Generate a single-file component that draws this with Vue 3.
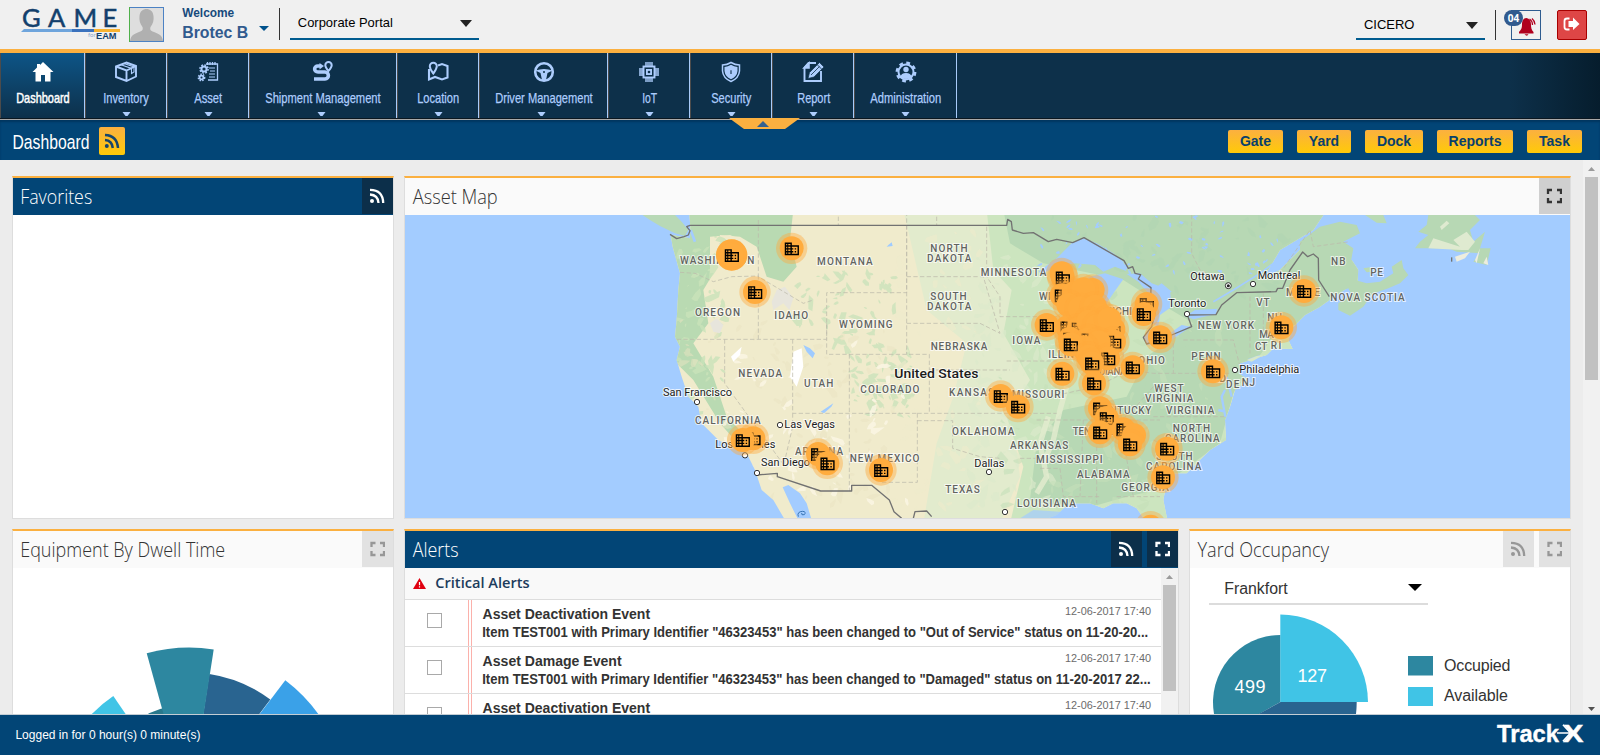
<script setup>
import { h } from 'vue'

// Single line of text fitted to a width; the element's bottom edge is the baseline.
const Fit = (props) =>
  h('svg', { class: 'fit', width: props.w, height: props.h }, [
    h('text', { x: props.x ?? -0.8, y: props.h, textLength: props.w, lengthAdjust: 'spacingAndGlyphs', fill: 'currentColor' }, props.t)
  ])
Fit.props = ['t', 'w', 'h', 'x']

const nav = [
  { t: 'Dashboard', w: 85, l: 53.5, icon: 'home', active: true },
  { t: 'Inventory', w: 82, l: 45.5, icon: 'box' },
  { t: 'Asset', w: 82, l: 28, icon: 'asset' },
  { t: 'Shipment Management', w: 148, l: 115.5, icon: 'route', shift: true },
  { t: 'Location', w: 82, l: 42, icon: 'map' },
  { t: 'Driver Management', w: 129, l: 97.5, icon: 'wheel', shift: true },
  { t: 'IoT', w: 82, l: 15, icon: 'chip' },
  { t: 'Security', w: 82, l: 40, icon: 'shield' },
  { t: 'Report', w: 82, l: 33, icon: 'report' },
  { t: 'Administration', w: 103, l: 71, icon: 'admin' }
]
const actions = [
  { t: 'Gate', w: 55 }, { t: 'Yard', w: 54 }, { t: 'Dock', w: 58 }, { t: 'Reports', w: 76 }, { t: 'Task', w: 55 }
]
const alerts = [
  { t: 'Asset Deactivation Event', tw: 167.5, d: 'Item TEST001 with Primary Identifier "46323453" has been changed to "Out of Service" status on 11-20-20...', dw: 666 },
  { t: 'Asset Damage Event', tw: 139, d: 'Item TEST001 with Primary Identifier "46323453" has been changed to "Damaged" status on 11-20-2017 22...', dw: 668.5 },
  { t: 'Asset Deactivation Event', tw: 167.5, d: 'Item TEST001 with Primary Identifier "46323453" has been changed to "Out of Service" status on 11-20-20...', dw: 666 }
]

const westStates = [
  ['WASHINGTON', 120, 161, 223], ['OREGON', 165, 317, 135], ['IDAHO', 403, 328, 101], ['MONTANA', 531, 164, 167],
  ['WYOMING', 597, 353, 161], ['NORTH', 871, 125, 112], ['DAKOTA', 861, 155, 133], ['SOUTH', 871, 269, 109],
  ['DAKOTA', 861, 299, 133], ['NEBRASKA', 872, 421, 170], ['NEVADA', 295, 500, 131], ['UTAH', 492, 530, 88],
  ['COLORADO', 661, 548, 177], ['KANSAS', 927, 557, 136], ['CALIFORNIA', 165, 643, 197], ['ARIZONA', 465, 734, 144],
  ['NEW MEXICO', 629, 757, 209], ['OKLAHOMA', 936, 676, 187], ['TEXAS', 916, 848, 103]
]
const eastStates = [
  ['MINNESOTA', 2, 199, 197], ['WISCONSIN', 177, 271, 170], ['MICHIGAN', 370, 315, 150], ['IOWA', 97, 401, 84],
  ['ILLINOIS', 205, 445, 130], ['INDIANA', 330, 495, 110], ['OHIO', 475, 463, 80], ['MISSOURI', 95, 565, 158],
  ['KENTUCKY', 350, 613, 164], ['VIRGINIA', 558, 613, 145], ['WEST', 523, 545, 88], ['VIRGINIA', 495, 575, 145],
  ['PENN', 634, 451, 88], ['NEW YORK', 653, 358, 169], ['VT', 829, 287, 40], ['NH', 862, 333, 44], ['MA', 838, 383, 44],
  ['CT', 825, 419, 37], ['RI', 872, 418, 32], ['NJ', 785, 527, 40], ['DE', 738, 535, 40], ['MD', 700, 517, 38],
  ['NORTH', 578, 665, 112], ['CAROLINA', 555, 695, 164], ['SOUTH', 528, 749, 110], ['CAROLINA', 498, 779, 166],
  ['TENNESSEE', 278, 676, 160], ['ARKANSAS', 90, 718, 175], ['MISSISSIPPI', 168, 760, 200], ['ALABAMA', 291, 805, 158],
  ['GEORGIA', 424, 844, 143], ['LOUISIANA', 111, 892, 177], ['MAINE', 918, 259, 102],
  ['NB', 1053, 164, 44], ['PE', 1171, 199, 38], ['NOVA SCOTIA', 1051, 272, 223]
]
const cities = [
  ['San Francisco', -951, 559, 207], ['Las Vegas', -587, 655, 152], ['Los Angeles', -794, 715, 180],
  ['San Diego', -657, 769, 147], ['Dallas', -17, 770, 90], ['Ottawa', 631, 209, 103], ['Montreal', 833, 206, 128],
  ['Toronto', 565, 292, 114], ['Philadelphia', 778, 490, 180]
]
const cityDots = [[-849, 576], [-600, 645], [-705, 736], [-669, 789], [27, 786], [819, 222], [621, 312], [765, 480], [75, 906]]

// [x, y, shows building icon, solid halo]
const markers = [
  [-745, 135, 1, 1], [-565, 115, 1], [-675, 246, 1], [-680, 685, 1], [-712, 690, 1], [-486, 732, 1], [-458, 760, 1], [-297, 780, 1],
  [248, 202, 1], [245, 190, 0], [248, 202, 2], [245, 256, 1], [282, 250, 0], [338, 240, 0], [310, 238, 0], [265, 285, 0], [262, 352, 1],
  [300, 295, 0], [345, 290, 0], [362, 316, 0], [368, 358, 1], [400, 358, 1], [296, 356, 1], [325, 335, 0], [352, 348, 0], [388, 328, 0],
  [270, 386, 1], [325, 388, 1], [330, 428, 1], [402, 395, 1], [356, 397, 0], [310, 412, 0], [272, 403, 1], [384, 445, 1], [325, 440, 0],
  [336, 460, 1], [200, 345, 1], [500, 282, 1], [491, 312, 1], [540, 382, 1], [699, 484, 1], [972, 243, 1], [904, 352, 1],
  [458, 472, 1], [247, 491, 1], [342, 520, 1], [62, 558, 1], [114, 590, 1], [360, 595, 1], [380, 624, 1], [360, 667, 1],
  [430, 658, 1], [462, 676, 0], [450, 703, 1], [561, 716, 1], [549, 802, 1], [512, 950, 0]
]

// Deterministic terrain speckle
let seed = 7
const rnd = () => ((seed = (seed * 16807) % 2147483647) / 2147483647)
const patches = (n, x0, y0, w, ht, max) =>
  Array.from({ length: n }, () => {
    const x = x0 + rnd() * w, y = y0 + rnd() * ht, a = rnd() * 6.28, s = 5 + rnd() * max
    return 'M' + [0, 1, 2, 3, 4, 5].map((i) => {
      const r = s * (0.35 + rnd() * 0.65), g = i * 1.047
      const px = Math.cos(g) * r * 1.5, py = Math.sin(g) * r * 0.7
      return `${(x + px * Math.cos(a) - py * Math.sin(a)).toFixed(0)} ${(y + px * Math.sin(a) + py * Math.cos(a)).toFixed(0)}`
    }).join('L') + 'Z'
  }).join('')
const creamW = patches(110, -900, 330, 650, 560, 15)
const paleW = patches(60, -780, 400, 560, 480, 14)
const greenW = patches(60, -550, 180, 300, 250, 14)
const greenRocky = patches(65, -390, 430, 190, 190, 14)
const greenCoast = patches(55, -910, 80, 150, 540, 18)
const greenE = patches(130, 60, 330, 720, 560, 20)
const paleE = patches(110, -30, 120, 260, 780, 19)
const darkE = patches(70, 200, 20, 740, 250, 20)
const plains = patches(80, -260, 40, 260, 860, 20)
const lakes = patches(65, 180, 20, 720, 170, 3)
</script>

<template>
  <div class="app">
    <header class="top">
      <svg class="logo" width="102" height="49" viewBox="20 0 102 49">
        <g class="logo-game"><text x="22" y="27">G</text><text x="48" y="27">A</text><text x="73.500" y="27" textLength="22">M</text><text x="102.500" y="27">E</text></g>
        <path d="M24 29H72V32H21Z" fill="#6fa5dc" /><path d="M72 29H94V32H72Z" fill="#3b72bd" /><path d="M94 29H120V32H94Z" fill="#f8b331" />
        <text x="88" y="37" class="logo-for">for</text><text x="96" y="39" textLength="20.500" lengthAdjust="spacingAndGlyphs" class="logo-eam">EAM</text>
      </svg>
      <svg class="avatar" width="35" height="35" viewBox="0 0 35 35">
        <rect x=".5" y=".5" width="34" height="34" fill="#dedede" stroke="#4c82c4" /><path d="M.5 0V35" stroke="#4fb04a" />
        <path d="M1 34C2 28 5 27 10 25C14 24 14 22 13.500 20C11 17 10 13 10.500 9C11 4 14 2 17.500 2S24 4 24.500 9C25 13 24 17 21.500 20C21 22 21 24 25 25C30 27 33 28 34 34Z" fill="#b0b0b0" />
      </svg>
      <div class="user">
        <Fit class="welcome" t="Welcome" :w="52" :h="17" />
        <Fit class="username" t="Brotec B" :w="66" :h="21" />
      </div>
      <svg class="user-caret" width="10" height="5"><path d="M0 0H10L5 5Z" fill="#00528c" /></svg>
      <i class="divider"></i>
      <div class="select portal">
        <Fit t="Corporate Portal" :w="95" :h="27" :x="-0.2" />
        <svg width="12" height="7"><path d="M0 0H12L6 7Z" fill="#222" /></svg>
      </div>
      <div class="select site">
        <Fit t="CICERO" :w="50.5" :h="29" :x="-0.1" />
        <svg width="12" height="7"><path d="M0 0H12L6 7Z" fill="#222" /></svg>
      </div>
      <i class="divider right"></i>
      <div class="bell">
        <svg width="28" height="28" viewBox="0 0 28 28"><path d="M14.500 7C11 7.500 10 10 10 14C10 18 8.500 19 7 21V22.500H21.500V21C19.500 19 19 17 19 13.500C19 10 17.500 7.500 14.500 7ZM12.500 23.300H16.500Q15 26 12.500 23.300Z" fill="#b0001e" /><path d="M17.500 8Q20.500 10 20.500 14M20 7.500Q22.500 9.500 23 13.500" fill="none" stroke="#b0001e" stroke-width="1.300" /></svg>
        <span class="badge">04</span>
      </div>
      <div class="logout">
        <svg width="28" height="28" viewBox="0 0 28 28"><path d="M11.500 7.500H9Q6.500 7.500 6.500 10V16Q6.500 18.500 9 18.500H11.500" fill="none" stroke="#fff" stroke-width="1.800" /><path d="M10.500 10H15V6.500L21.500 13L15 19V16H10.500Z" fill="#fff" /></svg>
      </div>
    </header>

    <nav class="nav">
      <div v-for="n in nav" :key="n.t" class="cell" :class="{ active: n.active, shift: n.shift }" :style="{ width: n.w + 'px' }">
        <svg class="ico" width="22" height="22" viewBox="0 0 22 22" fill="none" stroke="currentColor" stroke-width="1.600">
          <path v-if="n.icon === 'home'" d="M11 1L21.500 11H18.500V20.500H13V14H9V20.500H3.500V11H.5L5 6.500V3H8V4Z" fill="currentColor" stroke="none" />
          <g v-else-if="n.icon === 'box'"><path d="M1 5.500L11.500 1.500L21 5V15.500L11.500 20L1 16Z M1 5.500L11.500 9.500L21 5M11.500 9.500V20" stroke-width="1.900" /><path d="M6 3.800L16.500 7.500V12.500L19 11V6L9 2.500" stroke-width="1.100" /></g>
          <g v-else-if="n.icon === 'asset'"><path d="M9 3H20.500V19H11M10.500 1V4M13 1V4M15.500 1V4M18 1V4" stroke-width="1.300" /><path d="M12 7H18M13 10H18M12 13H18M12 16H18" stroke-width="1.100" /><circle cx="7" cy="8" r="2.600" stroke-width="2" /><circle cx="7" cy="8" r="4.100" stroke-dasharray="1.800 1.400" stroke-width="1.500" /><circle cx="4.500" cy="16.500" r="1.900" stroke-width="1.800" /><circle cx="4.500" cy="16.500" r="3.200" stroke-dasharray="1.500 1.200" stroke-width="1.400" /></g>
          <g v-else-if="n.icon === 'route'"><path d="M9 5H6C1.500 5 1.500 11 6 11H13C17.500 11 17.500 18 13 18H2" stroke-width="3.600" /><path d="M7.500 2L12 5L7.500 8.500Z" fill="currentColor" stroke="none" /><path d="M16.500 10C14.500 7.500 13.300 6 13.300 4.200A3.200 3.200 0 0 1 19.700 4.200C19.700 6 18.500 7.500 16.500 10Z" stroke-width="2" /></g>
          <g v-else-if="n.icon === 'map'"><path d="M2 8V18.500L8 16L15 18.500L20.500 16.500V5L15 3L11 4.500" stroke-width="2.100" /><path d="M6.300 12.500C4 9 2.800 7.500 2.800 5.200A3.500 3.500 0 0 1 9.800 5.200C9.800 7.500 8.600 9 6.300 12.500Z" stroke-width="2" /></g>
          <g v-else-if="n.icon === 'wheel'"><circle cx="11" cy="11" r="8.800" stroke-width="2.600" /><path d="M2.500 9.500Q11 6.500 19.500 9.500L14.500 12L13 19H9L7.500 12Z" fill="currentColor" stroke="none" /><circle cx="11" cy="11" r="1" fill="#0d304a" stroke="none" /></g>
          <g v-else-if="n.icon === 'chip'"><path d="M8 1V5M10 1V5M12 1V5M14 1V5M8 17V21M10 17V21M12 17V21M14 17V21M1 8H5M1 10H5M1 12H5M1 14H5M17 8H21M17 10H21M17 12H21M17 14H21" stroke-width="1.400" /><rect x="5.500" y="5.500" width="11" height="11" stroke-width="1.900" /><rect x="8" y="8" width="6" height="6" fill="currentColor" stroke="none" /><circle cx="11" cy="11" r="1.300" fill="#0d304a" stroke="none" /></g>
          <g v-else-if="n.icon === 'shield'"><path d="M11 1.500Q15 4 19.500 4V10Q19 17 11 20.500Q3 17 2.500 10V4Q7 4 11 1.500Z" stroke-width="1.500" /><path d="M11 3.700Q14 5.800 17.500 5.900V10Q17 15.500 11 18.300Q5 15.500 4.500 10V5.900Q8 5.800 11 3.700Z" fill="currentColor" stroke="none" /><path d="M11 9.300V13" stroke="#0d304a" stroke-width="1.100" /></g>
          <g v-else-if="n.icon === 'report'"><path d="M14 2H6.500L2.500 6.500V20H19V10" stroke-width="1.900" /><path d="M7 2V7H2Z" fill="currentColor" /><path d="M17.500 1.500L22 6L12 16L6 17.500L7.500 11.500Z" fill="currentColor" stroke="#0d304a" stroke-width=".7" /><path d="M9 14L17.500 5.500M15.500 4L19.500 8" stroke="#0d304a" stroke-width=".8" /></g>
          <g v-else><circle cx="11" cy="11" r="7.500" stroke-width="2" /><circle cx="11" cy="11" r="9" stroke-width="2.800" stroke-dasharray="3.700 3.370" /><circle cx="11" cy="8.500" r="2.700" fill="currentColor" stroke="none" /><path d="M5.500 16Q6 12 11 12T16.500 16Q11 20 5.500 16Z" fill="currentColor" stroke="none" /></g>
        </svg>
        <Fit class="nav-label" :t="n.t" :w="n.l" :h="20" :x="0.2" />
        <svg v-if="!n.active" class="nav-caret" width="9" height="5"><path d="M.5 0H8.500L5.500 4H3.500Z" fill="currentColor" /></svg>
      </div>
      <svg class="tab" width="71" height="11"><path d="M0 0H71L56 11H15Z" fill="#fbb040" /><path d="M28 9L34 3L40 9Z" fill="#34618f" /></svg>
    </nav>

    <section class="titlebar">
      <Fit class="page-title" t="Dashboard" :w="77" :h="29" :x="-0.5" />
      <span class="rss-btn"><svg width="16" height="16" viewBox="0 0 16 16"><circle cx="2.800" cy="13" r="2" fill="#17456c" /><path d="M1 7Q8 7.500 8.800 15M1 2Q13 2.500 14 15" fill="none" stroke="#17456c" stroke-width="2.500" /></svg></span>
      <span class="spacer"></span>
      <button v-for="a in actions" :key="a.t" class="act" :style="{ width: a.w + 'px' }">{{ a.t }}</button>
    </section>

    <main class="content">
      <div class="boards">
        <div class="row first">
          <section class="panel narrow dark">
            <div class="head"><Fit class="ptitle" t="Favorites" :w="72" :h="26" /><span class="pbtn"><svg width="16" height="16" viewBox="0 0 16 16"><circle cx="3" cy="13" r="2" /><path d="M1 6.500Q9 7 9.500 15M1 1.800Q14 2 14.200 15" class="line" /></svg></span></div>
          </section>
          <section class="panel wide">
            <div class="head"><Fit class="ptitle" t="Asset Map" :w="85" :h="26" :x="-0.3" /><span class="pbtn strong"><svg width="16" height="16" viewBox="0 0 16 16"><path d="M2 6V2H6M11 2H15V6M15 10V14H11M6 14H2V10" class="line" /></svg></span></div>
            <svg class="map" width="1165" height="303" viewBox="405 215 1165 303">
              <defs>
                <clipPath id="land"><path d="M-1000 0H-873L-869 50L-870 85L-928 74L-922 110L-900 190L-905 240L-910 330L-915 380L-900 410L-910 450L-895 500L-875 560L-845 590L-835 640L-785 690L-750 710L-700 730L-675 780L-655 840L-620 870L-585 930H-545L-570 880L-592 832L-575 825L-540 850L-520 880L-505 930H-300L190 930L230 915L250 895L270 880L330 880L370 895L400 880L440 880L470 895L495 930H562L550 870L565 790L620 790L650 760L690 720L738 690L735 630L750 590L765 540L805 510L775 490L780 460L860 435L880 415L938 417L925 390L940 350L975 315L1020 290L1060 262L1100 235L1132 220L1135 180L1115 150L1040 140L990 90L900 180L850 205L900 120L1000 60L1040 0Z" /></clipPath>
                <g id="pin"><circle r="47" fill="#ffa93b" opacity=".42" /><circle r="36" fill="#ffac3e" /></g>
                <path id="bld" d="M12 7V3H2v18h20V7H12zM5.500 19H4v-2h1.500zm0-4H4v-2h1.500zm0-4H4V9h1.500zm0-4H4V5h1.500zM10 19H7v-2h3zm0-4H7v-2h3zm0-4H7V9h3zm0-4H7V5h3zM20 19h-8v-2h2v-2h-2v-2h2v-2h-2V9h8zM18 11h-2v2h2zm0 4h-2v2h2z" />
              </defs>
              <rect x="405" y="215" width="1165" height="303" fill="#a3ccff" />
              <g transform="translate(980 210) scale(.333333)">
                <g clip-path="url(#land)">
                  <rect x="-1100" y="0" width="2400" height="950" fill="#f0ebcc" />
                  <path d="M-230 0H130L110 200L170 330L160 520L100 650L120 800L60 940H-170L-130 700L-80 560L-40 400L-160 300Z" fill="#e2ebcd" />
                  <path d="M20 0H1300V940H90L130 770L80 620L150 510L70 370L95 240L40 180Z" fill="#cce5bf" />
                  <path d="M70 0H1300V300L900 350L760 550L720 700L530 840L440 860L300 900L150 870L170 700L250 600L440 560L500 440L640 340L540 280L430 210L190 160L90 100Z" fill="#b7d8b4" />
                  <path d="M510 450L640 400L760 405L740 490L590 520L520 620L450 660L490 560Z" fill="#b7d8b4" />
                  <path d="M-1000 0H-560L-570 90L-550 170L-590 215L-640 200L-670 110L-720 80L-780 75L-800 190L-830 240L-815 340L-860 400L-800 500L-760 620L-700 680L-710 720L-780 640L-860 510L-940 430Z" fill="#b9dab2" />
                  <path d="M-810 80L-750 75L-690 100L-700 180L-810 190Z" fill="#f0ebcc" />
                  <path :d="greenCoast" fill="#c9e2b9" opacity=".8" /><path :d="greenW" fill="#c8e2b9" opacity=".75" />
                  <path :d="greenRocky" fill="#c8e2b9" opacity=".75" /><path :d="creamW" fill="#e9e3c1" opacity=".5" />
                  <path :d="paleW" fill="#fbf6e5" opacity=".8" /><path :d="plains" fill="#efebcb" opacity=".6" />
                  <path :d="paleE" fill="#dce9cb" opacity=".65" /><path :d="greenE" fill="#c4e0b9" opacity=".6" />
                  <path :d="darkE" fill="#acd2b0" opacity=".32" /><path :d="lakes" fill="#a3ccff" />
                  <path d="M-560 425L-535 415L-530 470L-550 530L-570 500ZM-747 440L-715 410L-720 435L-740 455Z" fill="#fff" />
                  <path d="M-530 405L-510 415L-495 430L-502 445L-520 425ZM-275 105L-265 97L-262 108L-280 110ZM-478 605L-440 580L-446 590L-468 610Z" fill="#9fcbff" />
                  <path d="M-610 240L-585 230L-560 265L-572 300L-590 280L-620 300L-625 275ZM-810 340L-790 325L-770 345L-780 370L-800 365Z" fill="#e7e5dc" />
                  <path d="M205 620L180 700L200 800L170 850M260 530L240 600L220 690L190 760" fill="none" stroke="#e3ecd0" stroke-width="16" opacity=".8" />
                </g>
                <path d="M-1020 10H-920L-895 35L-875 60L-885 78L-915 70L-960 48L-990 30Z" fill="#b8d9b6" />
                <path d="M-905 15L-880 40M-868 60L-855 95" fill="none" stroke="#a3ccff" stroke-width="8" />
                <path d="M175 185L230 145L275 100L310 85L350 100L400 130L430 155L438 183L405 170L370 185L345 165L285 160L230 170L190 190ZM280 240L330 200L375 190L430 208L400 250L380 280L355 340L350 440L320 445L290 400ZM440 192L480 190L515 220L570 240L575 290L540 315L535 350L515 340L525 310L505 250L475 215ZM545 220L575 245L560 252L530 230ZM490 380L500 405L560 400L632 350L605 345L570 370L525 385L505 365ZM618 318L645 300L712 296L708 312L640 328Z" fill="#a3ccff" />
                <path d="M700 275L760 240L840 190L880 160" fill="none" stroke="#a3ccff" stroke-width="5" />
                <path d="M736 620L725 560L735 540M735 605L715 600M805 450L840 438M740 500L755 560" fill="none" stroke="#a3ccff" stroke-width="7" />
                <path d="M150 905L220 905L210 930H140ZM120 925L160 900L240 905L260 925Z" fill="#a3ccff" opacity=".7" />
                <path d="M800 450L830 438L850 435L815 455Z" fill="#d7e7c9" />
                <path d="M960 95L1020 50L1080 35L1130 45L1140 70L1090 95L1120 115L1110 170L1135 185L1125 210L1160 220L1200 215L1240 190L1235 170L1265 150L1270 175L1285 195L1260 220L1225 235L1195 245L1175 255L1150 290L1110 317L1075 300L1075 280L1115 255L1105 235L1060 250L1020 260L960 290Z" fill="#b7d8b4" />
                <path d="M1155 15L1210 15L1220 40L1190 38ZM1150 175L1170 172L1175 185L1160 187Z" fill="#b9dab4" />
                <path d="M1345 15H1485L1500 30L1470 60L1480 95L1515 65L1500 115L1532 115L1520 165L1480 155L1500 130L1430 125L1405 115L1305 115L1320 95L1345 75L1315 65L1340 45Z" fill="#b7d8b4" />
                <path d="M1345 115L1360 85L1440 110L1420 90L1460 65L1485 95L1465 120L1445 120ZM1380 50L1400 32L1408 40L1385 60Z" fill="#dfead0" />
                <path d="M1425 140L1470 125L1455 145L1430 155ZM1485 150L1500 115L1490 160ZM1510 160L1520 140L1525 165Z" fill="#ededde" />
                <g fill="none" stroke="#bcb9aa" stroke-width="2.200" stroke-dasharray="13 7">
                  <path d="M-900 187L-855 190L-800 215L-745 200L-665 198L-665 388M-910 388H-460V248H-220V0M-766 388V520L-585 770M-562 388V610H-188M-460 340V433H-152V610M-392 433V843M-562 610V650L-590 770M-220 200H10L60 370M-220 340H0L60 370M-220 46V433M-152 480H90M-188 610H120M-188 610V817H-300M-188 632H-82V715L0 740L60 745M-665 30V200L-530 280L-500 270M-425 20V45M-130 20V45M20 50V200L60 260V320H240M80 453H230M120 610H230M120 745H200M170 630H540M210 560L350 530L450 480L520 490L580 490H750M580 400V490M310 630L300 860M350 690V880M430 690L460 860M410 860H540M180 775H240L250 860H360M430 480V390M520 530L450 610L380 660M520 620H740M520 690L620 740M610 390H760L780 470M810 260V430M850 250V430M635 15V130L660 180L740 220M900 190L990 60L1000 110L1110 95" />
                </g>
                <g fill="none" stroke="#727272" stroke-width="4" stroke-linejoin="round">
                  <path d="M-930 73L-910 86L-888 80L-875 75L-870 62L-880 50L-870 46H80L83 28L94 35L97 60L130 70L160 68L185 83L205 95L230 88L278 98L312 83L432 152L445 175L458 170L465 190L482 194L475 207L513 233L512 265L525 310L515 350L490 382L500 402L575 375L635 350L622 315L708 314L725 285L770 248L888 245L893 235L908 235L930 180L968 126L983 140L1000 132L1015 145L1016 210L1048 260" />
                  <path d="M-669 795L-608 790V800L-478 843H-385V826H-325L-272 870L-258 905L-235 925M-200 925L-195 905L-160 903L-145 920" />
                  <path d="M1415 142V155" />
                </g>
                <g class="state">
                  <text v-for="(s, i) in westStates" :key="'w' + i" :x="s[1] - 1020" :y="s[2]" :textLength="s[3]" lengthAdjust="spacing">{{ s[0] }}</text>
                  <text v-for="(s, i) in eastStates" :key="'e' + i" :x="s[1]" :y="s[2]" :textLength="s[3]" lengthAdjust="spacing">{{ s[0] }}</text>
                </g>
                <g class="city"><text v-for="c in cities" :key="c[0]" :x="c[1]" :y="c[2]" :textLength="c[3]" lengthAdjust="spacingAndGlyphs">{{ c[0] }}</text></g>
                <text class="country" x="-257" y="504" textLength="252" lengthAdjust="spacingAndGlyphs">United States</text>
                <g fill="#fff" stroke="#333" stroke-width="3"><circle v-for="(d, i) in cityDots" :key="i" :cx="d[0]" :cy="d[1]" r="8" /><circle cx="745" cy="227" r="9" /></g>
                <circle cx="745" cy="227" r="4.500" fill="#222" />
                <path d="M-545 920Q-550 905 -532 904Q-520 905 -527 914Q-537 917 -535 909" fill="none" stroke="#3774b5" stroke-width="3" />
                <g v-for="(m, i) in markers" :key="i" :transform="`translate(${m[0]} ${m[1]})`">
                  <circle v-if="m[3]" r="47" fill="#ffac3e" /><use v-if="m[2] !== 2" href="#pin" /><use v-if="m[2]" href="#bld" transform="translate(-25 -24) scale(2.130)" />
                </g>
              </g>
            </svg>
          </section>
        </div>
        <div class="row second">
          <section class="panel narrow">
            <div class="head"><Fit class="ptitle" t="Equipment By Dwell Time" :w="205" :h="26" /><span class="pbtn"><svg width="16" height="16" viewBox="0 0 16 16"><path d="M2.500 6V2H6.500M11 2H15V6M15 10V14H11M6.500 14H2.500V10" class="line" /></svg></span></div>
            <svg width="380" height="146" viewBox="13 568 380 146">
              <g transform="translate(189.300 807)">
                <path d="M0 0L-41 -93.500A102.500 102.500 0 0 1 -20 -100.500Z" fill="#28788c" />
                <path d="M0 0L-107 -82A134.600 134.600 0 0 1 -76 -111Z" fill="#40c4e6" />
                <path d="M0 0L20 -133.100A134.600 134.600 0 0 1 81 -107.500Z" fill="#296490" />
                <path d="M0 0L96 -126.800A159 159 0 0 1 138 -79Z" fill="#3aa1e8" />
                <path d="M0 0L-42.600 -153.700A159.500 159.500 0 0 1 24.400 -157.600Z" fill="#2d87a0" />
              </g>
            </svg>
          </section>
          <section class="panel middle dark">
            <div class="head"><Fit class="ptitle" t="Alerts" :w="46" :h="26" :x="-0.3" /><span class="pbtn"><svg width="16" height="16" viewBox="0 0 16 16"><circle cx="3" cy="13" r="2" /><path d="M1 6.500Q9 7 9.500 15M1 1.800Q14 2 14.200 15" class="line" /></svg></span><span class="pbtn"><svg width="16" height="16" viewBox="0 0 16 16"><path d="M2.500 6V2H6.500M11 2H15V6M15 10V14H11M6.500 14H2.500V10" class="line" /></svg></span></div>
            <div class="alerts">
              <div class="list">
                <div class="crit"><svg width="13" height="11" viewBox="0 0 13 11"><path d="M6.500 0L13 11H0Z" fill="#e00010" /><path d="M6.500 4V7.200M6.500 8.300V9.500" stroke="#fff" stroke-width="1.200" /></svg><Fit t="Critical Alerts" :w="94.5" :h="20" /></div>
                <div v-for="(a, i) in alerts" :key="i" class="alert">
                  <span class="check"></span><span class="stripe"></span>
                  <div class="body">
                    <div class="line1"><Fit :t="a.t" :w="a.tw" :h="19" :x="-0.4" /><Fit class="date" t="12-06-2017 17:40" :w="86" :h="15" :x="0" /></div>
                    <Fit class="desc" :t="a.d" :w="a.dw" :h="18" />
                  </div>
                </div>
              </div>
              <div class="innerbar"><svg width="17" height="17"><path d="M5 11L8.500 7L12 11Z" fill="#9b9b9b" /></svg><i></i></div>
            </div>
          </section>
          <section class="panel yard">
            <div class="head"><Fit class="ptitle" t="Yard Occupancy" :w="131.5" :h="26" :x="-0.5" /><span class="pbtn"><svg width="16" height="16" viewBox="0 0 16 16"><circle cx="3" cy="13" r="2" /><path d="M1 6.500Q9 7 9.500 15M1 1.800Q14 2 14.200 15" class="line" /></svg></span><span class="pbtn"><svg width="16" height="16" viewBox="0 0 16 16"><path d="M2.500 6V2H6.500M11 2H15V6M15 10V14H11M6.500 14H2.500V10" class="line" /></svg></span></div>
            <div class="yselect"><Fit t="Frankfort" :w="63.5" :h="26" /><svg width="14" height="7"><path d="M0 0H14L7 7Z" fill="#000" /></svg></div>
            <svg width="380" height="109" viewBox="1190 605 380 109">
              <path d="M1280.500 635A67.500 67.500 0 0 0 1214 714H1259L1280.500 702Z" fill="#2d87a0" />
              <path d="M1280.500 702H1356.700Q1356.700 708 1356 714H1258.500Z" fill="#296490" />
              <path d="M1280.300 614.600A87.700 87.700 0 0 1 1368 702H1280.300Z" fill="#40c4e6" />
              <text class="pie" x="1234.500" y="693" textLength="31">499</text><text class="pie" x="1297.500" y="682" textLength="29.500">127</text>
              <rect x="1408" y="656" width="25" height="19.500" fill="#2d87a0" /><rect x="1408" y="687" width="25" height="19" fill="#40c4e6" />
              <text class="legend" x="1444" y="670.500" textLength="66.500">Occupied</text><text class="legend" x="1444" y="701" textLength="64">Available</text>
            </svg>
          </section>
        </div>
      </div>
      <div class="pagebar">
        <svg width="17" height="17"><path d="M5 11L8.500 7L12 11Z" fill="#9b9b9b" /></svg><i></i>
        <svg class="down" width="17" height="17"><path d="M5 10L8.500 14L12 10Z" fill="#505050" /></svg>
      </div>
    </main>

    <footer class="foot">
      <Fit t="Logged in for 0 hour(s) 0 minute(s)" :w="185" :h="24" :x="-0.6" />
      <svg class="track" width="88" height="24" viewBox="0 0 88 24"><text x="0" y="19.500" textLength="62" lengthAdjust="spacingAndGlyphs">Track</text><text x="66" y="19.500" textLength="20.500" lengthAdjust="spacingAndGlyphs">X</text><path d="M65 3L72.500 11L65 19" fill="none" stroke="#024576" stroke-width="2.400" /><path d="M60 11H73M66 2.800L73.500 11L66 19.200" fill="none" stroke="#fff" stroke-width="1.700" /></svg>
    </footer>
  </div>
</template>

<style>
html, body { margin: 0; overflow: hidden; }
svg.fit { display: block; overflow: visible; flex: none; }
</style>

<style scoped>
.app { width: 1600px; height: 755px; display: flex; flex-direction: column; overflow: hidden; background: #ececec; font-family: "Liberation Sans", Arial, sans-serif; color: #333; }
.app * { box-sizing: border-box; }
svg { display: block; flex: none; }
.top { height: 53px; flex: none; display: flex; align-items: flex-start; background: #f0f0f0; border-bottom: 4px solid #fbb040; }
.logo { margin-left: 20px; }
.logo-game { font: 25.500px Lato, sans-serif; fill: #123f6c; stroke: #123f6c; stroke-width: .5px; }
.logo-for { font: 6px Lato, sans-serif; fill: #8da7cd; }
.logo-eam { font: bold 9.500px "Liberation Sans", sans-serif; fill: #123f6c; }
.avatar { margin: 7px 0 0 7px; }
.user { margin-left: 19px; font-weight: bold; }
.welcome { font-size: 12px; color: #174a7c; }
.username { font-size: 16px; color: #315a8e; }
.user-caret { margin: 26px 0 0 10px; }
.divider { width: 1px; height: 32px; margin: 8px 0 0 10px; background: #333; }
.select { display: flex; justify-content: space-between; height: 40px; border-bottom: 2px solid #005b8f; font-size: 13px; color: #000; }
.portal { width: 189px; margin-left: 10px; padding: 0 7px 0 8px; }
.portal svg:last-child { margin-top: 20px; }
.site { width: 129px; margin-left: auto; padding: 0 7px 0 8px; }
.site svg:last-child { margin-top: 22px; }
.divider.right { margin-top: 10px; height: 30px; }
.bell { position: relative; width: 30px; height: 30px; margin: 10px 0 0 15px; border: 1px solid #2f5c90; }
.badge { position: absolute; left: -8px; top: -1px; width: 19px; height: 16px; border-radius: 8px; background: #315a8e; color: #fff; font: bold 10px/16px "Open Sans", sans-serif; text-align: center; }
.logout { width: 30px; height: 30px; margin: 10px 13px 0 16px; border: 1px solid #a80000; border-radius: 2px; background: #de4646; }
.nav { position: relative; height: 67px; flex: none; display: flex; padding-bottom: 2px; background: linear-gradient(90deg, #0d304a 1510px, #061d2d 1600px); box-shadow: inset 0 -1px #a9a9a9, inset 0 -2px #0b1720; }
.cell { display: flex; flex-direction: column; align-items: center; border-right: 1px solid #a8cbfa; border-left: 1px solid #4c4b4b; color: #adcdfd; }
.cell.active { color: #fff; background: linear-gradient(#0d5587, #0d304a); }
.ico { margin-top: 8px; }
.nav-label { font-size: 15px; stroke: currentColor; stroke-width: .25px; }
.active .nav-label { stroke-width: .5px; }
.nav-caret { margin-top: 9px; }
.shift .nav-caret { margin-right: 4px; }
.tab { position: absolute; left: 729px; top: 65px; z-index: 2; }
.titlebar { height: 40px; flex: none; display: flex; padding: 0 18px 0 13px; background: #024576; box-shadow: inset 0 2px 2px #01365f; }
.page-title { color: #fff; font-size: 20.500px; }
.rss-btn { width: 26px; height: 28px; margin: 7px 0 0 9px; padding: 6px 5px; border-radius: 2px; background: linear-gradient(#fbb040, #ffca08); }
.spacer { flex: 1; }
.act { height: 23px; margin: 10px 0 0 14px; padding: 0; border: 0; border-radius: 2px; background: linear-gradient(#fbb040, #ffca08); color: #08406b; font: bold 14px/23px "Liberation Sans", Arial, sans-serif; }
.content { height: 554px; flex: none; display: flex; overflow: hidden; }
.boards { flex: 1; padding: 16px 12px 0; }
.row { display: flex; gap: 10px; }
.second { margin-top: 10px; }
.panel { height: 343px; background: #fff; border: 1px solid #ddd; border-top: 2px solid #fbb040; overflow: hidden; }
.second .panel { height: 220px; }
.narrow { width: 382px; }
.wide { width: 1167px; }
.middle { width: 775px; }
.yard { width: 382px; }
.head { height: 37px; display: flex; align-items: flex-start; gap: 5px; padding-left: 8px; background: #fafafa; }
.dark .head { background: #024576; color: #fff; }
.ptitle { margin-right: auto; font: 300 20px "Open Sans", sans-serif; }
.pbtn { width: 31px; height: 36px; padding: 10px 7px; background: #e2e2e2; color: #979797; }
.pbtn.strong { background: #cfcfcf; color: #333; }
.dark .pbtn { background: #0c2f4a; color: #fff; }
.pbtn svg { fill: currentColor; }
.pbtn .line { fill: none; stroke: currentColor; stroke-width: 2.300; }
.state { font: 500 30px Roboto, sans-serif; fill: #62645f; stroke: #fff; stroke-opacity: .7; stroke-width: 6px; paint-order: stroke; }
.city { font: 31px Roboto, sans-serif; fill: #1c1c1c; stroke: #fff; stroke-opacity: .75; stroke-width: 6px; paint-order: stroke; }
.country { font: 500 41px Roboto, sans-serif; fill: #1c1c1c; stroke: #fff; stroke-opacity: .75; stroke-width: 6px; paint-order: stroke; }
.alerts { display: flex; }
.list { width: 756px; }
.crit { height: 32px; display: flex; gap: 10px; padding-left: 8px; background: #f9f9f9; border-bottom: 1px solid #ddd; font: 600 14px "Open Sans", sans-serif; color: #1c3c5c; }
.crit svg:first-child { margin-top: 10px; }
.alert { height: 47px; display: flex; border-bottom: 1px solid #ddd; font-size: 14px; font-weight: bold; }
.check { width: 15px; height: 15px; margin: 13px 26px 0 22px; border: 1px solid #a9a9a9; }
.stripe { width: 4px; border: solid #fbb1ab; border-width: 0 1px; }
.body { flex: 1; padding: 0 10px 0 11px; }
.line1 { display: flex; justify-content: space-between; }
.desc { font-size: 14px; }
.date { font-size: 11px; font-weight: normal; color: #6b6b6b; }
.innerbar { width: 17px; background: #f1f1f1; }
.innerbar i { display: block; width: 13px; height: 106px; margin: 0 2px; background: #c1c1c1; }
.yselect { display: flex; justify-content: space-between; width: 219px; height: 37px; margin-left: 19px; padding: 0 6px 0 16px; border-bottom: 2px solid #dcdcdc; font-size: 16px; }
.yselect svg:last-child { margin-top: 16px; }
.pie { font-size: 18px; fill: #fff; }
.legend { font-size: 16px; fill: #333; }
.pagebar { width: 17px; display: flex; flex-direction: column; background: #f1f1f1; }
.pagebar i { width: 13px; height: 203px; margin-left: 2px; background: #c1c1c1; }
.pagebar .down { margin-top: auto; }
.foot { height: 41px; flex: none; display: flex; justify-content: space-between; padding: 0 15px 0 16px; background: #024576; border-top: 1px solid #c4cdd4; color: #fff; font-size: 12px; }
.track { margin-top: 7px; overflow: visible; }
.track text { font: bold 24px "Liberation Sans", Arial, sans-serif; fill: #fff; stroke: #fff; stroke-width: .4px; }
</style>
